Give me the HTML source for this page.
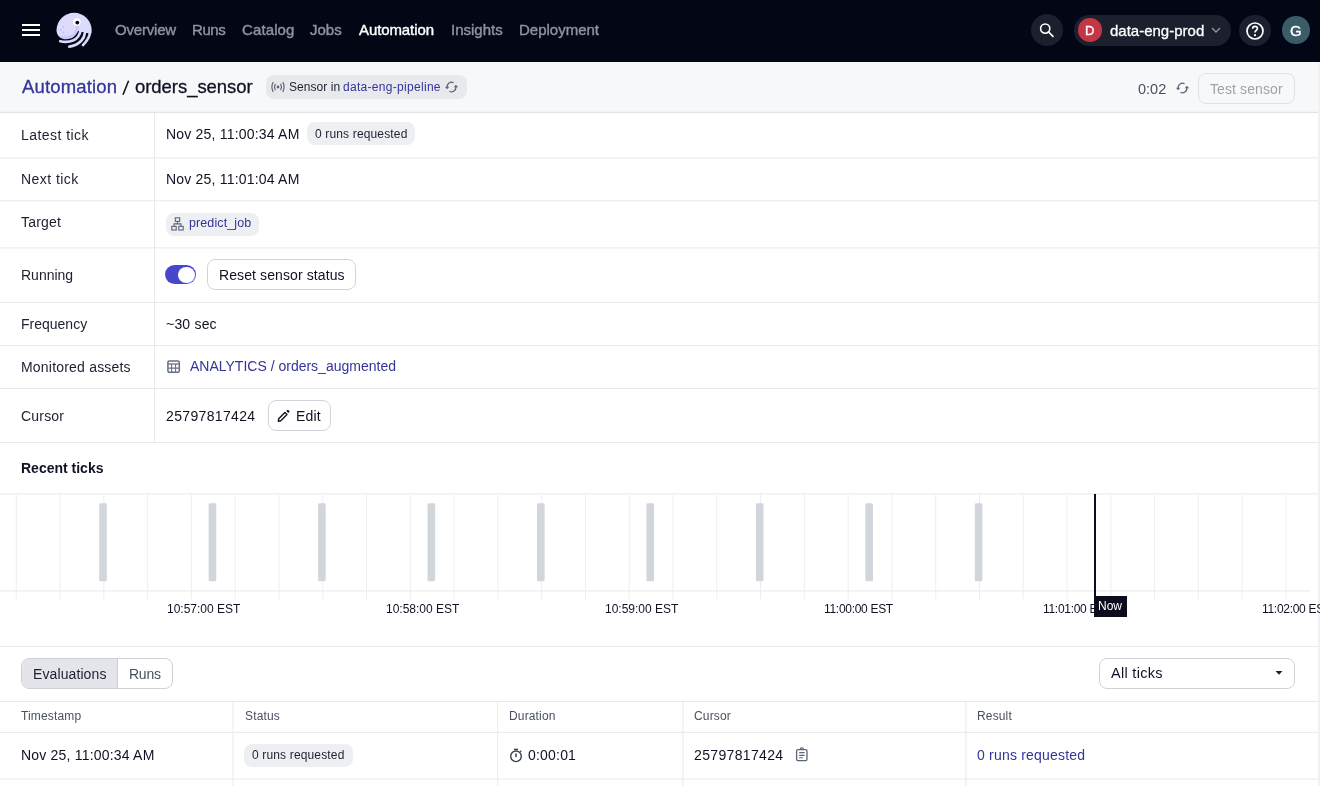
<!DOCTYPE html>
<html><head><meta charset="utf-8"><title>orders_sensor</title>
<style>
html,body{margin:0;padding:0;width:1320px;height:786px;overflow:hidden;background:#FFFFFF;}
body{position:relative;font-family:"Liberation Sans", sans-serif;}
.t{position:absolute;line-height:1;white-space:nowrap;will-change:transform;}
.r{position:absolute;}
</style></head><body>
<div class="r" style="left:0px;top:0px;width:1320px;height:62px;background:#030615;"></div>
<div class="r" style="left:22px;top:24px;width:18px;height:2px;background:#FFFFFF;"></div>
<div class="r" style="left:22px;top:29px;width:18px;height:2px;background:#FFFFFF;"></div>
<div class="r" style="left:22px;top:34px;width:18px;height:2px;background:#FFFFFF;"></div>
<svg class="r" style="left:54px;top:10px" width="40" height="40" viewBox="0 0 40 40">
<circle cx="20.1" cy="20.4" r="17.6" fill="#DCDBFB"/>
<path d="M8.5 27.2 C14 28.3, 19 27, 21.5 24 C23 22, 23.6 19.5, 23.4 17.5" stroke="#CCC9F6" stroke-width="3.6" fill="none" stroke-linecap="round"/>
<path d="M-1 16 L3.1 23.6 C4 26, 6 28.4, 9 28.9 C13 29.6, 17.4 28.8, 19.5 27 C21.5 25.5, 23 23.5, 24.1 21.1 L28.5 21.9 L33.1 23 L41 24 L41 41 L-1 41 Z" fill="#030615"/>
<path d="M6.3 31.2 C10 32.1, 16 31.8, 19.6 30.2 C23.2 28.6, 25.8 25, 26.6 20.6" stroke="#DCDBFB" stroke-width="2.7" fill="none" stroke-linecap="round"/>
<path d="M15.3 36.6 C19 36.2, 24 34.2, 27.3 30.8 C29.2 28.7, 30.6 26, 31.1 22.2" stroke="#DCDBFB" stroke-width="2.7" fill="none" stroke-linecap="round"/>
<path d="M29 35.1 C31 33, 34.3 29.2, 35.3 25.5 L35.9 22.5" stroke="#DCDBFB" stroke-width="2.7" fill="none" stroke-linecap="round"/>
<circle cx="22.9" cy="12" r="3.7" fill="#FFFFFF"/>
<circle cx="23.3" cy="12.6" r="1.9" fill="#030615"/>
<circle cx="9.4" cy="17" r="1.1" fill="#C3C0F2"/>
<circle cx="6.6" cy="19.8" r="1.1" fill="#C3C0F2"/>
<circle cx="9.4" cy="22.4" r="1.1" fill="#C3C0F2"/>
</svg>
<div class="t" style="left:114.6px;top:22.10px;font-size:15px;color:#8F93A1;letter-spacing:-0.2px;-webkit-text-stroke:0.4px #8F93A1;">Overview</div>
<div class="t" style="left:192.1px;top:22.10px;font-size:15px;color:#8F93A1;letter-spacing:-0.45px;-webkit-text-stroke:0.4px #8F93A1;">Runs</div>
<div class="t" style="left:242.4px;top:22.10px;font-size:15px;color:#8F93A1;letter-spacing:0.12px;-webkit-text-stroke:0.4px #8F93A1;">Catalog</div>
<div class="t" style="left:309.9px;top:22.10px;font-size:15px;color:#8F93A1;letter-spacing:0px;-webkit-text-stroke:0.4px #8F93A1;">Jobs</div>
<div class="t" style="left:358.9px;top:22.10px;font-size:15px;color:#FFFFFF;letter-spacing:-0.1px;-webkit-text-stroke:0.4px #FFFFFF;">Automation</div>
<div class="t" style="left:450.6px;top:22.10px;font-size:15px;color:#8F93A1;letter-spacing:0px;-webkit-text-stroke:0.4px #8F93A1;">Insights</div>
<div class="t" style="left:519.1px;top:22.10px;font-size:15px;color:#8F93A1;letter-spacing:0px;-webkit-text-stroke:0.4px #8F93A1;">Deployment</div>
<div class="r" style="left:1031px;top:14px;width:32px;height:32px;background:#1C1F2D;border-radius:50%;"></div>
<svg class="r" style="left:1039px;top:22px" width="16" height="16" viewBox="0 0 16 16">
<circle cx="6.2" cy="6.6" r="4.6" stroke="#fff" stroke-width="1.6" fill="none"/>
<path d="M9.6 10 L14 14.4" stroke="#fff" stroke-width="1.7" stroke-linecap="round"/></svg>
<div class="r" style="left:1074px;top:14.5px;width:157px;height:31.0px;background:#1C1F2D;border-radius:16px;"></div>
<div class="r" style="left:1078px;top:18.3px;width:23.5px;height:23.499999999999996px;background:#C23645;border-radius:50%;"></div>
<div class="t" style="left:1085.0px;top:23.80px;font-size:13px;color:#FFFFFF;letter-spacing:0px;-webkit-text-stroke:0.35px #fff;">D</div>
<div class="t" style="left:1110.0px;top:22.70px;font-size:15px;color:#FFFFFF;letter-spacing:0.0px;-webkit-text-stroke:0.3px #fff;">data-eng-prod</div>
<svg class="r" style="left:1210px;top:26px" width="12" height="8" viewBox="0 0 12 8">
<path d="M2 2 L6 6 L10 2" stroke="#8F93A1" stroke-width="1.4" fill="none"/></svg>
<div class="r" style="left:1239.3px;top:14.6px;width:31.299999999999955px;height:31.299999999999997px;background:#1C1F2D;border-radius:50%;"></div>
<svg class="r" style="left:1245px;top:20.5px" width="20" height="20" viewBox="0 0 20 20">
<circle cx="10" cy="10" r="8" stroke="#fff" stroke-width="1.7" fill="none"/>
<path d="M7.6 7.8 C7.6 6.2 8.7 5.4 10 5.4 C11.4 5.4 12.4 6.3 12.4 7.6 C12.4 9.4 10 9.4 10 11.4" stroke="#fff" stroke-width="1.7" fill="none"/>
<circle cx="10" cy="14.2" r="1.1" fill="#fff"/></svg>
<div class="r" style="left:1282.2px;top:16.4px;width:27.5px;height:27.5px;background:#3A5C67;border-radius:50%;"></div>
<div class="t" style="left:1290.3px;top:22.90px;font-size:15px;color:#FFFFFF;letter-spacing:0px;-webkit-text-stroke:0.3px #fff;">G</div>
<div class="r" style="left:0px;top:62px;width:1318px;height:50px;background:#F7F8FA;"></div>
<div class="t" style="left:21.9px;top:77.94px;font-size:18.5px;color:#34349A;letter-spacing:0.15px;-webkit-text-stroke:0.3px #34349A;">Automation</div>
<svg class="r" style="left:118px;top:76px" width="16" height="22" viewBox="0 0 16 22"><path d="M10.6 4.8 L5 18.8" stroke="#0F1222" stroke-width="1.55"/></svg>
<div class="t" style="left:135.1px;top:77.94px;font-size:18.5px;color:#0F1222;letter-spacing:-0.05px;-webkit-text-stroke:0.3px #0F1222;">orders_sensor</div>
<div class="r" style="left:266px;top:75px;width:201px;height:24px;background:#E8E9EC;border-radius:8px;"></div>
<svg class="r" style="left:270px;top:80px" width="16" height="14" viewBox="0 0 16 14">
<circle cx="8" cy="7" r="1.4" fill="#5E6474"/>
<path d="M5.2 4.2 Q3.8 7 5.2 9.8 M10.8 4.2 Q12.2 7 10.8 9.8 M3 2.5 Q0.8 7 3 11.5 M13 2.5 Q15.2 7 13 11.5" stroke="#5E6474" stroke-width="1.2" fill="none" stroke-linecap="round"/></svg>
<div class="t" style="left:289.3px;top:80.64px;font-size:12px;color:#1C2030;letter-spacing:0.05px;">Sensor in</div>
<div class="t" style="left:342.9px;top:80.64px;font-size:12px;color:#34349A;letter-spacing:0.3px;">data-eng-pipeline</div>
<svg class="r" style="left:444.2px;top:79.9px" width="15" height="14" viewBox="0 0 15 14">
<path d="M9.6 2.8 A4.4 4.4 0 0 0 3.1 7" stroke="#5B6478" stroke-width="1.3" fill="none"/>
<path d="M0.9 6.7 H5.3 L3.1 9.2 Z" fill="#5B6478"/>
<path d="M5.4 11.2 A4.4 4.4 0 0 0 11.9 7" stroke="#5B6478" stroke-width="1.3" fill="none"/>
<path d="M9.7 7.3 H14.1 L11.9 4.8 Z" fill="#5B6478"/></svg>
<div class="t" style="left:1137.6px;top:81.73px;font-size:14.5px;color:#4A5060;">0:02</div>
<svg class="r" style="left:1175.0px;top:80.9px" width="15" height="14" viewBox="0 0 15 14">
<path d="M9.6 2.8 A4.4 4.4 0 0 0 3.1 7" stroke="#5B6478" stroke-width="1.3" fill="none"/>
<path d="M0.9 6.7 H5.3 L3.1 9.2 Z" fill="#5B6478"/>
<path d="M5.4 11.2 A4.4 4.4 0 0 0 11.9 7" stroke="#5B6478" stroke-width="1.3" fill="none"/>
<path d="M9.7 7.3 H14.1 L11.9 4.8 Z" fill="#5B6478"/></svg>
<div class="r" style="left:1198px;top:73px;width:97px;height:31px;background:transparent;border:1px solid #DFE1E6;border-radius:8px;box-sizing:border-box;"></div>
<div class="t" style="left:1209.8px;top:82.15px;font-size:14px;color:#9EA2AC;letter-spacing:0.1px;">Test sensor</div>
<div class="r" style="left:1318px;top:62px;width:2px;height:724px;background:#F1F1F1;"></div>
<svg class="r" style="left:0;top:0" width="1320" height="786" viewBox="0 0 1320 786"><line x1="0" y1="112.4" x2="1318" y2="112.4" stroke="#E1E3E8" stroke-width="1.4"/><line x1="0" y1="157.9" x2="1318" y2="157.9" stroke="#E8E9ED"/><line x1="0" y1="200.8" x2="1318" y2="200.8" stroke="#E8E9ED"/><line x1="0" y1="247.9" x2="1318" y2="247.9" stroke="#E8E9ED"/><line x1="0" y1="302.5" x2="1318" y2="302.5" stroke="#E8E9ED"/><line x1="0" y1="345.5" x2="1318" y2="345.5" stroke="#E8E9ED"/><line x1="0" y1="388.5" x2="1318" y2="388.5" stroke="#E8E9ED"/><line x1="0" y1="442.5" x2="1318" y2="442.5" stroke="#E8E9ED"/><line x1="0" y1="493.9" x2="1318" y2="493.9" stroke="#E8E9ED"/><line x1="0" y1="646.5" x2="1318" y2="646.5" stroke="#E8E9ED"/><line x1="0" y1="701.5" x2="1318" y2="701.5" stroke="#E8E9ED"/><line x1="0" y1="732.4" x2="1318" y2="732.4" stroke="#E8E9ED"/><line x1="0" y1="779.0" x2="1318" y2="779.0" stroke="#E8E9ED"/><line x1="0" y1="590.9" x2="1310" y2="590.9" stroke="#E8E9ED"/><line x1="154.5" y1="113" x2="154.5" y2="442.5" stroke="#E8E9ED"/><line x1="16.30" y1="494.4" x2="16.30" y2="599" stroke="#EDEEF1"/><line x1="60.08" y1="494.4" x2="60.08" y2="599" stroke="#EDEEF1"/><line x1="103.86" y1="494.4" x2="103.86" y2="599" stroke="#EDEEF1"/><line x1="147.64" y1="494.4" x2="147.64" y2="599" stroke="#EDEEF1"/><line x1="191.42" y1="494.4" x2="191.42" y2="599" stroke="#EDEEF1"/><line x1="235.20" y1="494.4" x2="235.20" y2="599" stroke="#EDEEF1"/><line x1="278.98" y1="494.4" x2="278.98" y2="599" stroke="#EDEEF1"/><line x1="322.76" y1="494.4" x2="322.76" y2="599" stroke="#EDEEF1"/><line x1="366.54" y1="494.4" x2="366.54" y2="599" stroke="#EDEEF1"/><line x1="410.32" y1="494.4" x2="410.32" y2="599" stroke="#EDEEF1"/><line x1="454.10" y1="494.4" x2="454.10" y2="599" stroke="#EDEEF1"/><line x1="497.88" y1="494.4" x2="497.88" y2="599" stroke="#EDEEF1"/><line x1="541.66" y1="494.4" x2="541.66" y2="599" stroke="#EDEEF1"/><line x1="585.44" y1="494.4" x2="585.44" y2="599" stroke="#EDEEF1"/><line x1="629.22" y1="494.4" x2="629.22" y2="599" stroke="#EDEEF1"/><line x1="673.00" y1="494.4" x2="673.00" y2="599" stroke="#EDEEF1"/><line x1="716.78" y1="494.4" x2="716.78" y2="599" stroke="#EDEEF1"/><line x1="760.56" y1="494.4" x2="760.56" y2="599" stroke="#EDEEF1"/><line x1="804.34" y1="494.4" x2="804.34" y2="599" stroke="#EDEEF1"/><line x1="848.12" y1="494.4" x2="848.12" y2="599" stroke="#EDEEF1"/><line x1="891.90" y1="494.4" x2="891.90" y2="599" stroke="#EDEEF1"/><line x1="935.68" y1="494.4" x2="935.68" y2="599" stroke="#EDEEF1"/><line x1="979.46" y1="494.4" x2="979.46" y2="599" stroke="#EDEEF1"/><line x1="1023.24" y1="494.4" x2="1023.24" y2="599" stroke="#EDEEF1"/><line x1="1067.02" y1="494.4" x2="1067.02" y2="599" stroke="#EDEEF1"/><line x1="1110.80" y1="494.4" x2="1110.80" y2="599" stroke="#EDEEF1"/><line x1="1154.58" y1="494.4" x2="1154.58" y2="599" stroke="#EDEEF1"/><line x1="1198.36" y1="494.4" x2="1198.36" y2="599" stroke="#EDEEF1"/><line x1="1242.14" y1="494.4" x2="1242.14" y2="599" stroke="#EDEEF1"/><line x1="1285.92" y1="494.4" x2="1285.92" y2="599" stroke="#EDEEF1"/><line x1="233.1" y1="702" x2="233.1" y2="786" stroke="#E8E9ED"/><line x1="497.7" y1="702" x2="497.7" y2="786" stroke="#E8E9ED"/><line x1="682.9" y1="702" x2="682.9" y2="786" stroke="#E8E9ED"/><line x1="965.9" y1="702" x2="965.9" y2="786" stroke="#E8E9ED"/></svg>
<div class="t" style="left:21.0px;top:127.65px;font-size:14px;color:#1C2030;letter-spacing:0.45px;">Latest tick</div>
<div class="t" style="left:21.0px;top:172.45px;font-size:14px;color:#1C2030;letter-spacing:0.45px;">Next tick</div>
<div class="t" style="left:21.0px;top:214.95px;font-size:14px;color:#1C2030;letter-spacing:0.2px;">Target</div>
<div class="t" style="left:21.0px;top:268.15px;font-size:14px;color:#1C2030;letter-spacing:0.0px;">Running</div>
<div class="t" style="left:21.0px;top:316.65px;font-size:14px;color:#1C2030;letter-spacing:0.0px;">Frequency</div>
<div class="t" style="left:21.0px;top:360.45px;font-size:14px;color:#1C2030;letter-spacing:0.2px;">Monitored assets</div>
<div class="t" style="left:21.0px;top:409.15px;font-size:14px;color:#1C2030;letter-spacing:0.2px;">Cursor</div>
<div class="t" style="left:165.6px;top:127.15px;font-size:14px;color:#0F1222;letter-spacing:0.2px;">Nov 25, 11:00:34 AM</div>
<div class="r" style="left:307px;top:122px;width:108px;height:23px;background:#EEEFF2;border-radius:8px;"></div>
<div class="t" style="left:314.8px;top:127.74px;font-size:12px;color:#1C2030;letter-spacing:0.15px;">0 runs requested</div>
<div class="t" style="left:165.6px;top:172.15px;font-size:14px;color:#0F1222;letter-spacing:0.2px;">Nov 25, 11:01:04 AM</div>
<div class="r" style="left:166px;top:212.5px;width:92.5px;height:23.0px;background:#EEEFF2;border-radius:8px;"></div>
<svg class="r" style="left:171px;top:217px" width="13" height="14" viewBox="0 0 13 14">
<rect x="4.3" y="0.8" width="4.4" height="3.6" stroke="#5E6474" stroke-width="1.1" fill="none"/>
<rect x="0.8" y="9.4" width="4.4" height="3.6" stroke="#5E6474" stroke-width="1.1" fill="none"/>
<rect x="7.8" y="9.4" width="4.4" height="3.6" stroke="#5E6474" stroke-width="1.1" fill="none"/>
<path d="M6.5 4.4 V6.9 M3 9.4 V6.9 H10 V9.4" stroke="#5E6474" stroke-width="1.1" fill="none"/></svg>
<div class="t" style="left:189.2px;top:216.82px;font-size:12.5px;color:#34349A;letter-spacing:0.1px;">predict_job</div>
<div class="r" style="left:165px;top:265px;width:31px;height:19px;background:#4747CC;border-radius:10px;"></div>
<div class="r" style="left:178px;top:266.5px;width:16.5px;height:16.0px;background:#FFFFFF;border-radius:50%;"></div>
<div class="r" style="left:207px;top:259px;width:149px;height:31px;background:#FFFFFF;border:1px solid #D1D4DB;border-radius:8px;box-sizing:border-box;"></div>
<div class="t" style="left:218.6px;top:268.35px;font-size:14px;color:#0F1222;letter-spacing:0.1px;">Reset sensor status</div>
<div class="t" style="left:165.6px;top:316.75px;font-size:14px;color:#0F1222;letter-spacing:0.2px;">~30 sec</div>
<svg class="r" style="left:167px;top:360px" width="14" height="14" viewBox="0 0 14 14">
<rect x="0.9" y="0.9" width="11.4" height="11.4" rx="1.5" stroke="#667085" stroke-width="1.5" fill="none"/>
<path d="M0.9 4 H12.3" stroke="#667085" stroke-width="1.3"/>
<path d="M0.9 8.1 H12.3 M4.6 4 V12.3 M8.6 4 V12.3" stroke="#667085" stroke-width="1.1" fill="none"/></svg>
<div class="t" style="left:189.6px;top:359.15px;font-size:14px;color:#34349A;letter-spacing:0.0px;">ANALYTICS / orders_augmented</div>
<div class="t" style="left:165.6px;top:408.65px;font-size:14px;color:#0F1222;letter-spacing:0.35px;">25797817424</div>
<div class="r" style="left:268px;top:400px;width:63px;height:31px;background:#FFFFFF;border:1px solid #D1D4DB;border-radius:8px;box-sizing:border-box;"></div>
<svg class="r" style="left:276px;top:409px" width="14" height="14" viewBox="0 0 14 14">
<path d="M2.3 12.2 L2.7 9.7 L8.9 3.5 L11 5.6 L4.8 11.8 Z" stroke="#111424" stroke-width="1.4" fill="none" stroke-linejoin="round"/>
<path d="M10.3 2.1 L11.3 1.1 Q11.8 0.7 12.3 1.1 L13.3 2.1 Q13.7 2.6 13.3 3.1 L12.3 4.1 Z" fill="#111424"/></svg>
<div class="t" style="left:295.6px;top:409.15px;font-size:14px;color:#0F1222;letter-spacing:0.2px;">Edit</div>
<div class="t" style="left:21.0px;top:461.45px;font-size:14px;color:#0F1222;font-weight:700;letter-spacing:0.0px;">Recent ticks</div>
<svg class="r" style="left:0;top:0" width="1320" height="786" viewBox="0 0 1320 786"><rect x="99.20" y="503.3" width="7.6" height="77.9" rx="1.3" fill="#D1D5DC"/><rect x="208.65" y="503.3" width="7.6" height="77.9" rx="1.3" fill="#D1D5DC"/><rect x="318.10" y="503.3" width="7.6" height="77.9" rx="1.3" fill="#D1D5DC"/><rect x="427.55" y="503.3" width="7.6" height="77.9" rx="1.3" fill="#D1D5DC"/><rect x="537.00" y="503.3" width="7.6" height="77.9" rx="1.3" fill="#D1D5DC"/><rect x="646.45" y="503.3" width="7.6" height="77.9" rx="1.3" fill="#D1D5DC"/><rect x="755.90" y="503.3" width="7.6" height="77.9" rx="1.3" fill="#D1D5DC"/><rect x="865.35" y="503.3" width="7.6" height="77.9" rx="1.3" fill="#D1D5DC"/><rect x="974.80" y="503.3" width="7.6" height="77.9" rx="1.3" fill="#D1D5DC"/></svg>
<div class="t" style="left:167.0px;top:602.84px;font-size:12px;color:#0F1222;letter-spacing:0.0px;white-space:nowrap;">10:57:00 EST</div>
<div class="t" style="left:385.9px;top:602.84px;font-size:12px;color:#0F1222;letter-spacing:0.0px;white-space:nowrap;">10:58:00 EST</div>
<div class="t" style="left:604.8px;top:602.84px;font-size:12px;color:#0F1222;letter-spacing:0.0px;white-space:nowrap;">10:59:00 EST</div>
<div class="t" style="left:823.7px;top:602.84px;font-size:12px;color:#0F1222;letter-spacing:-0.3px;white-space:nowrap;">11:00:00 EST</div>
<div class="t" style="left:1042.6px;top:602.84px;font-size:12px;color:#0F1222;letter-spacing:-0.3px;white-space:nowrap;">11:01:00 EST</div>
<div class="t" style="left:1261.5px;top:602.84px;font-size:12px;color:#0F1222;letter-spacing:-0.3px;white-space:nowrap;">11:02:00 EST</div>
<div class="r" style="left:1093.8px;top:494px;width:2.0px;height:106px;background:#0B0D1C;"></div>
<div class="r" style="left:1094px;top:596.3px;width:32.5px;height:20.5px;background:#0B0D1C;"></div>
<div class="t" style="left:1097.5px;top:599.84px;font-size:12px;color:#FFFFFF;">Now</div>
<div class="r" style="left:21px;top:658px;width:151.5px;height:31px;background:#FFFFFF;border:1px solid #CDD0D7;border-radius:8px;box-sizing:border-box;overflow:hidden;"></div>
<div class="r" style="left:22px;top:659px;width:95px;height:29px;background:#E3E5EA;border-radius:7px 0 0 7px;"></div>
<div class="r" style="left:117px;top:659px;width:1px;height:29px;background:#CDD0D7;"></div>
<div class="t" style="left:33.0px;top:667.15px;font-size:14px;color:#1C2030;letter-spacing:0.1px;">Evaluations</div>
<div class="t" style="left:128.6px;top:667.15px;font-size:14px;color:#4A5060;letter-spacing:-0.25px;">Runs</div>
<div class="r" style="left:1099.4px;top:658px;width:195.39999999999986px;height:31px;background:#FFFFFF;border:1px solid #CFD2D9;border-radius:8px;box-sizing:border-box;"></div>
<div class="t" style="left:1111.3px;top:666.43px;font-size:14.5px;color:#0F1222;letter-spacing:0.3px;">All ticks</div>
<svg class="r" style="left:1274px;top:670px" width="10" height="6" viewBox="0 0 10 6"><path d="M1.5 1 L8.5 1 L5 4.8 Z" fill="#1C2030"/></svg>
<div class="t" style="left:21.0px;top:710.14px;font-size:12px;color:#4A5060;letter-spacing:0.15px;">Timestamp</div>
<div class="t" style="left:244.8px;top:710.14px;font-size:12px;color:#4A5060;letter-spacing:0.15px;">Status</div>
<div class="t" style="left:508.8px;top:710.14px;font-size:12px;color:#4A5060;letter-spacing:0.15px;">Duration</div>
<div class="t" style="left:693.6px;top:710.14px;font-size:12px;color:#4A5060;letter-spacing:0.15px;">Cursor</div>
<div class="t" style="left:977.3px;top:710.14px;font-size:12px;color:#4A5060;letter-spacing:0.15px;">Result</div>
<div class="t" style="left:20.9px;top:748.15px;font-size:14px;color:#0F1222;letter-spacing:0.2px;">Nov 25, 11:00:34 AM</div>
<div class="r" style="left:244.4px;top:743.6px;width:108.70000000000002px;height:23.399999999999977px;background:#EEEFF2;border-radius:8px;"></div>
<div class="t" style="left:252.3px;top:749.04px;font-size:12px;color:#1C2030;letter-spacing:0.15px;">0 runs requested</div>
<svg class="r" style="left:509px;top:747px" width="15" height="16" viewBox="0 0 15 16">
<circle cx="7" cy="9.3" r="5.3" stroke="#374151" stroke-width="1.4" fill="none"/>
<path d="M5 2.4 H9" stroke="#374151" stroke-width="1.4"/>
<path d="M11 4.9 L12.2 3.7" stroke="#374151" stroke-width="1.3"/>
<path d="M7 7 V9.6" stroke="#374151" stroke-width="1.5" stroke-linecap="round"/></svg>
<div class="t" style="left:528.1px;top:748.15px;font-size:14px;color:#0F1222;letter-spacing:0.2px;">0:00:01</div>
<div class="t" style="left:694.1px;top:748.15px;font-size:14px;color:#0F1222;letter-spacing:0.35px;">25797817424</div>
<svg class="r" style="left:795px;top:746px" width="14" height="16" viewBox="0 0 14 16">
<rect x="1.6" y="3.6" width="10.4" height="11" rx="1.4" stroke="#5D6679" stroke-width="1.3" fill="none"/>
<path d="M5 3.7 Q5.2 1.8 6.8 1.8 Q8.4 1.8 8.6 3.7" stroke="#5D6679" stroke-width="1.2" fill="none"/>
<path d="M4.2 6.6 H9.6 M4.2 9.4 H9.6 M4.2 11.7 H7.8" stroke="#5D6679" stroke-width="1.1" fill="none"/></svg>
<div class="t" style="left:977.3px;top:748.15px;font-size:14px;color:#34349A;letter-spacing:0.2px;">0 runs requested</div>
</body></html>
